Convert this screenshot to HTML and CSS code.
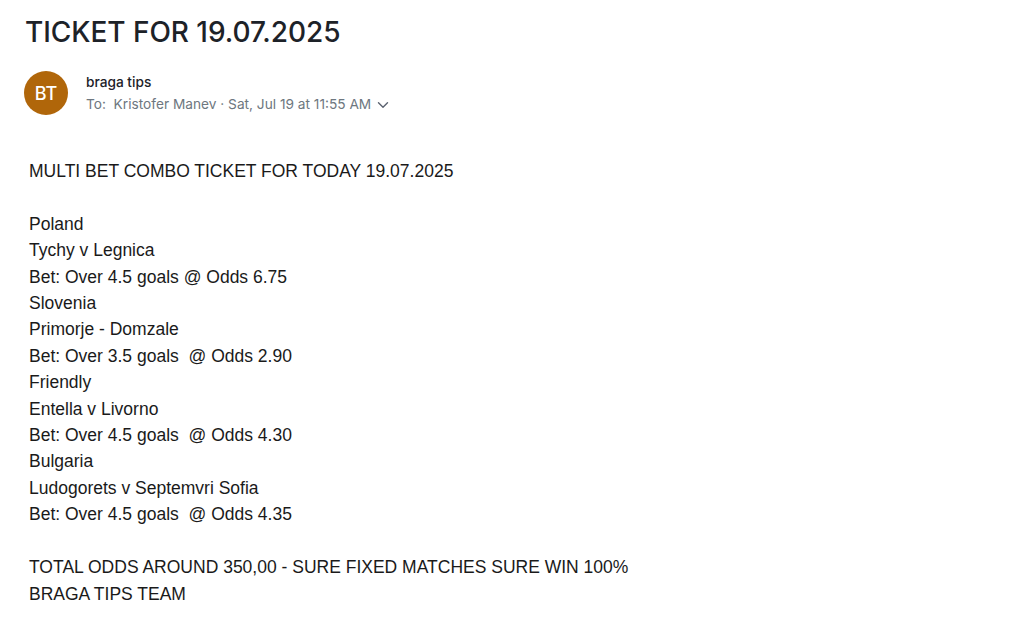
FILE: index.html
```html
<!DOCTYPE html>
<html>
<head>
<meta charset="utf-8">
<link rel="stylesheet" href="styles.css">
</head>
<body>
<div class="mail">
  <h1 class="subject">TICKET FOR 19.07.2025</h1>
  <div class="sender">
    <div class="avatar">BT</div>
    <div class="meta">
      <div class="from">braga tips</div>
      <div class="to"><span>To:&nbsp; Kristofer Manev · Sat, Jul 19 at 11:55 AM</span><svg class="chev" width="12" height="8" viewBox="0 0 12 8"><path d="M1.5 1.8 L6 6.2 L10.5 1.8" fill="none" stroke="#5b6270" stroke-width="1.4" stroke-linecap="round" stroke-linejoin="round"/></svg></div>
    </div>
  </div>
  <div class="body">
    <p>MULTI BET COMBO TICKET FOR TODAY 19.07.2025</p>
    <p class="blank">&nbsp;</p>
    <p>Poland</p>
    <p>Tychy v Legnica</p>
    <p>Bet: Over 4.5 goals @ Odds 6.75</p>
    <p>Slovenia</p>
    <p>Primorje - Domzale</p>
    <p>Bet: Over 3.5 goals&nbsp; @ Odds 2.90</p>
    <p>Friendly</p>
    <p>Entella v Livorno</p>
    <p>Bet: Over 4.5 goals&nbsp; @ Odds 4.30</p>
    <p>Bulgaria</p>
    <p>Ludogorets v Septemvri Sofia</p>
    <p>Bet: Over 4.5 goals&nbsp; @ Odds 4.35</p>
    <p class="blank">&nbsp;</p>
    <p>TOTAL ODDS AROUND 350,00 - SURE FIXED MATCHES SURE WIN 100%</p>
    <p>BRAGA TIPS TEAM</p>
  </div>
</div>
</body>
</html>
```
FILE: styles.css
```css
html, body {
  margin: 0;
  padding: 0;
  background: #ffffff;
}
.mail {
  padding: 14px 0 0 24px;
}
.subject {
  margin: 0 0 0 1px;
  font-family: Inter, "Noto Sans", sans-serif;
  font-weight: 500;
  font-size: 28px;
  line-height: 36px;
  letter-spacing: -0.05px;
  color: #1d2228;
}
.sender {
  display: flex;
  align-items: center;
  gap: 18px;
  margin-top: 21px;
}
.avatar {
  width: 44px;
  height: 44px;
  border-radius: 50%;
  background: #b0660a;
  color: #ffffff;
  display: flex;
  align-items: center;
  justify-content: center;
  font-family: Inter, "Noto Sans", sans-serif;
  font-size: 18px;
  font-weight: 500;
}
.meta {
  display: flex;
  flex-direction: column;
  gap: 5px;
}
.from {
  font-family: Inter, "Noto Sans", sans-serif;
  font-size: 13.7px;
  font-weight: 500;
  color: #1d2228;
  line-height: 17px;
}
.to {
  font-family: Inter, "Noto Sans", sans-serif;
  font-size: 13.7px;
  color: #6e7780;
  line-height: 17px;
  display: flex;
  align-items: center;
}
.chev {
  margin-left: 6px;
  margin-top: 2px;
}
.body {
  margin-top: 43px;
  padding-left: 5px;
  font-family: "Liberation Sans", Arial, sans-serif;
  font-size: 17.5px;
  line-height: 26.4px;
  color: #1a1a1a;
}
.body p {
  margin: 0;
}
```
